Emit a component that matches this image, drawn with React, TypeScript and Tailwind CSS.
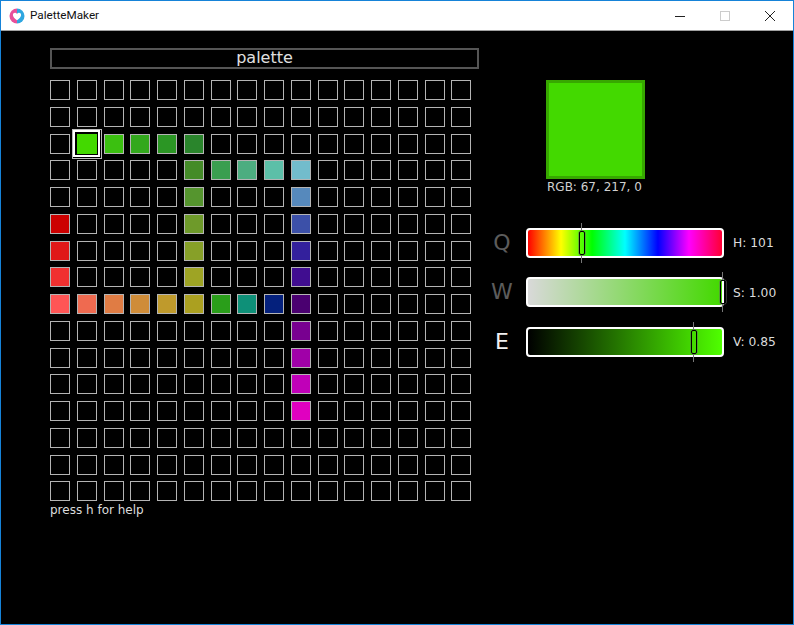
// App.tsx - PaletteMaker window
const SWATCHES: Record<string, string> = {
  "2,1": "#43d900",
  "2,2": "#3bc010",
  "2,3": "#32a81c",
  "2,4": "#2b9624",
  "2,5": "#2a852c",
  "3,5": "#448b28",
  "3,6": "#3a9e50",
  "3,7": "#4cad80",
  "3,8": "#5cbfa8",
  "3,9": "#72bccc",
  "4,5": "#55952e",
  "4,9": "#5689bc",
  "5,0": "#cc0000",
  "5,5": "#6e9a2a",
  "5,9": "#3c50a8",
  "6,0": "#e01818",
  "6,5": "#87a028",
  "6,9": "#33209c",
  "7,0": "#f03030",
  "7,5": "#9ea424",
  "7,9": "#400d90",
  "8,0": "#ff5555",
  "8,1": "#ef6a50",
  "8,2": "#e07c44",
  "8,3": "#cf8c38",
  "8,4": "#bf9a2c",
  "8,5": "#aba020",
  "8,6": "#2a9e1a",
  "8,7": "#0e9078",
  "8,8": "#04207c",
  "8,9": "#4a0070",
  "9,9": "#780090",
  "10,9": "#a000a8",
  "11,9": "#c000b8",
  "12,9": "#e000c0",
};

const cells = Array.from({ length: 256 }, (_, i) => ({
  row: Math.floor(i / 16),
  col: i % 16,
}));

function AppIcon() {
  return (
    <svg width="16" height="16" viewBox="0 0 16 16">
      <path d="M8 0.5a7.5 7.5 0 0 0 0 15z" fill="#e8509a" />
      <path d="M8 0.5a7.5 7.5 0 0 1 0 15z" fill="#2ea6e0" />
      <path
        d="M8 12.2C5.6 10.4 3.9 8.9 3.9 7c0-1.3 1-2.2 2.1-2.2.9 0 1.6.4 2 1.1.4-.7 1.1-1.1 2-1.1 1.1 0 2.1.9 2.1 2.2 0 1.9-1.7 3.4-4.1 5.2z"
        fill="#fff"
      />
    </svg>
  );
}

function TitleBar() {
  return (
    <header className="flex h-[30px] shrink-0 items-center border-b border-[#a0a0a0] bg-white pl-[8px] pr-[1px] [font-family:'Roboto','Noto_Sans',sans-serif]">
      <AppIcon />
      <span className="ml-[5px] text-[11.7px] text-[#111]">PaletteMaker</span>
      <div className="ml-auto flex items-center">
        <svg width="45" height="12" viewBox="0 0 45 12">
          <path d="M18 6.5h10" stroke="#222" strokeWidth="1" />
        </svg>
        <svg width="45" height="12" viewBox="0 0 45 12">
          <rect x="18.5" y="1.5" width="9" height="9" fill="none" stroke="#ccc" strokeWidth="1" />
        </svg>
        <svg width="45" height="12" viewBox="0 0 45 12">
          <path d="M18 1l10 10M28 1L18 11" stroke="#222" strokeWidth="1" fill="none" />
        </svg>
      </div>
    </header>
  );
}

function Cell({ row, col }: { row: number; col: number }) {
  const color = SWATCHES[row + "," + col];
  const selected = row === 2 && col === 1;
  return (
    <div
      className={
        "relative h-[20px] w-[20px] border-[1.5px] " +
        (selected ? "border-[#43d900]" : "border-[#b4b4b4]")
      }
      style={{ backgroundColor: color ?? "#000" }}
    >
      {selected && (
        <div className="absolute -inset-[6px] border border-[#bbbbbb] p-[0.5px]">
          <div className="h-full w-full border-[2px] border-white" />
        </div>
      )}
    </div>
  );
}

type SliderProps = {
  letter: string;
  letterClass: string;
  gradient: string;
  marker: number;
  label: string;
};

function Slider({ letter, letterClass, gradient, marker, label }: SliderProps) {
  return (
    <div className="flex h-[30px] items-center">
      <span className={"mr-[12px] w-[24px] text-center text-[22px] leading-none " + letterClass}>{letter}</span>
      <div className={"relative h-[30px] w-[198px] rounded-[4px] border-[2px] border-white " + gradient}>
        {/* tick above and below the handle */}
        <div className="absolute -top-[7px] h-[8px] w-[1px] bg-[#777]" style={{ left: marker }} />
        <div className="absolute top-[25px] h-[8px] w-[1px] bg-[#777]" style={{ left: marker }} />
        <div
          className="absolute top-[1px] h-[24px] w-[6px] rounded-[2px] border-[1.5px] border-black shadow-[0_0_0_0.5px_#666]"
          style={{ left: marker - 2.5 }}
        />
      </div>
      <span className="ml-[9px] pt-[1px] text-[12.3px] text-[#dcdcdc]">{label}</span>
    </div>
  );
}

export default function App() {
  return (
    <div className="flex h-[625px] w-[794px] flex-col overflow-hidden border border-[#1683d8] bg-black [font-family:'DejaVu_Sans',sans-serif]">
      <TitleBar />
      <main className="flex flex-1 pl-[49px] pt-[17px]">
        <section className="w-[429px]">
          <div className="flex h-[21px] items-center justify-center border-[2px] border-[#555] pb-[1px] text-[16px] leading-none text-[#e0e0e0]">
            palette
          </div>
          <div className="mt-[11px] grid w-[421px] grid-cols-[repeat(16,20px)] gap-[6.75px]">
            {cells.map((c) => (
              <Cell key={c.row + "-" + c.col} row={c.row} col={c.col} />
            ))}
          </div>
          <p className="mt-[2px] text-[12px] leading-[15px] text-[#dcdcdc]">press h for help</p>
        </section>

        <aside className="ml-[11px] flex flex-col">
          <div className="ml-[55.5px] mt-[32px] h-[99px] w-[99px] border-[3px] border-[#37a800] bg-[#43d900]" />
          <p className="ml-[57px] mt-[1px] text-[12px] leading-[14px] text-[#d0d0d0]">RGB: 67, 217, 0</p>
          <div className="mt-[34px] flex flex-col gap-[19.3px]">
            <Slider
              letter="Q"
              letterClass="text-[#5c5c5c]"
              gradient="bg-[linear-gradient(to_right,#ff0000,#ffff00_17%,#00ff00_33%,#00ffff_50%,#0000ff_67%,#ff00ff_83%,#ff0033)]"
              marker={53}
              label="H: 101"
            />
            <Slider
              letter="W"
              letterClass="text-[#5c5c5c]"
              gradient="bg-[linear-gradient(to_right,#d9d9d9,#43d900)]"
              marker={194}
              label="S: 1.00"
            />
            <Slider
              letter="E"
              letterClass="text-[#f0f0f0]"
              gradient="bg-[linear-gradient(to_right,#000000,#4fff00)]"
              marker={165}
              label="V: 0.85"
            />
          </div>
        </aside>
      </main>
    </div>
  );
}
